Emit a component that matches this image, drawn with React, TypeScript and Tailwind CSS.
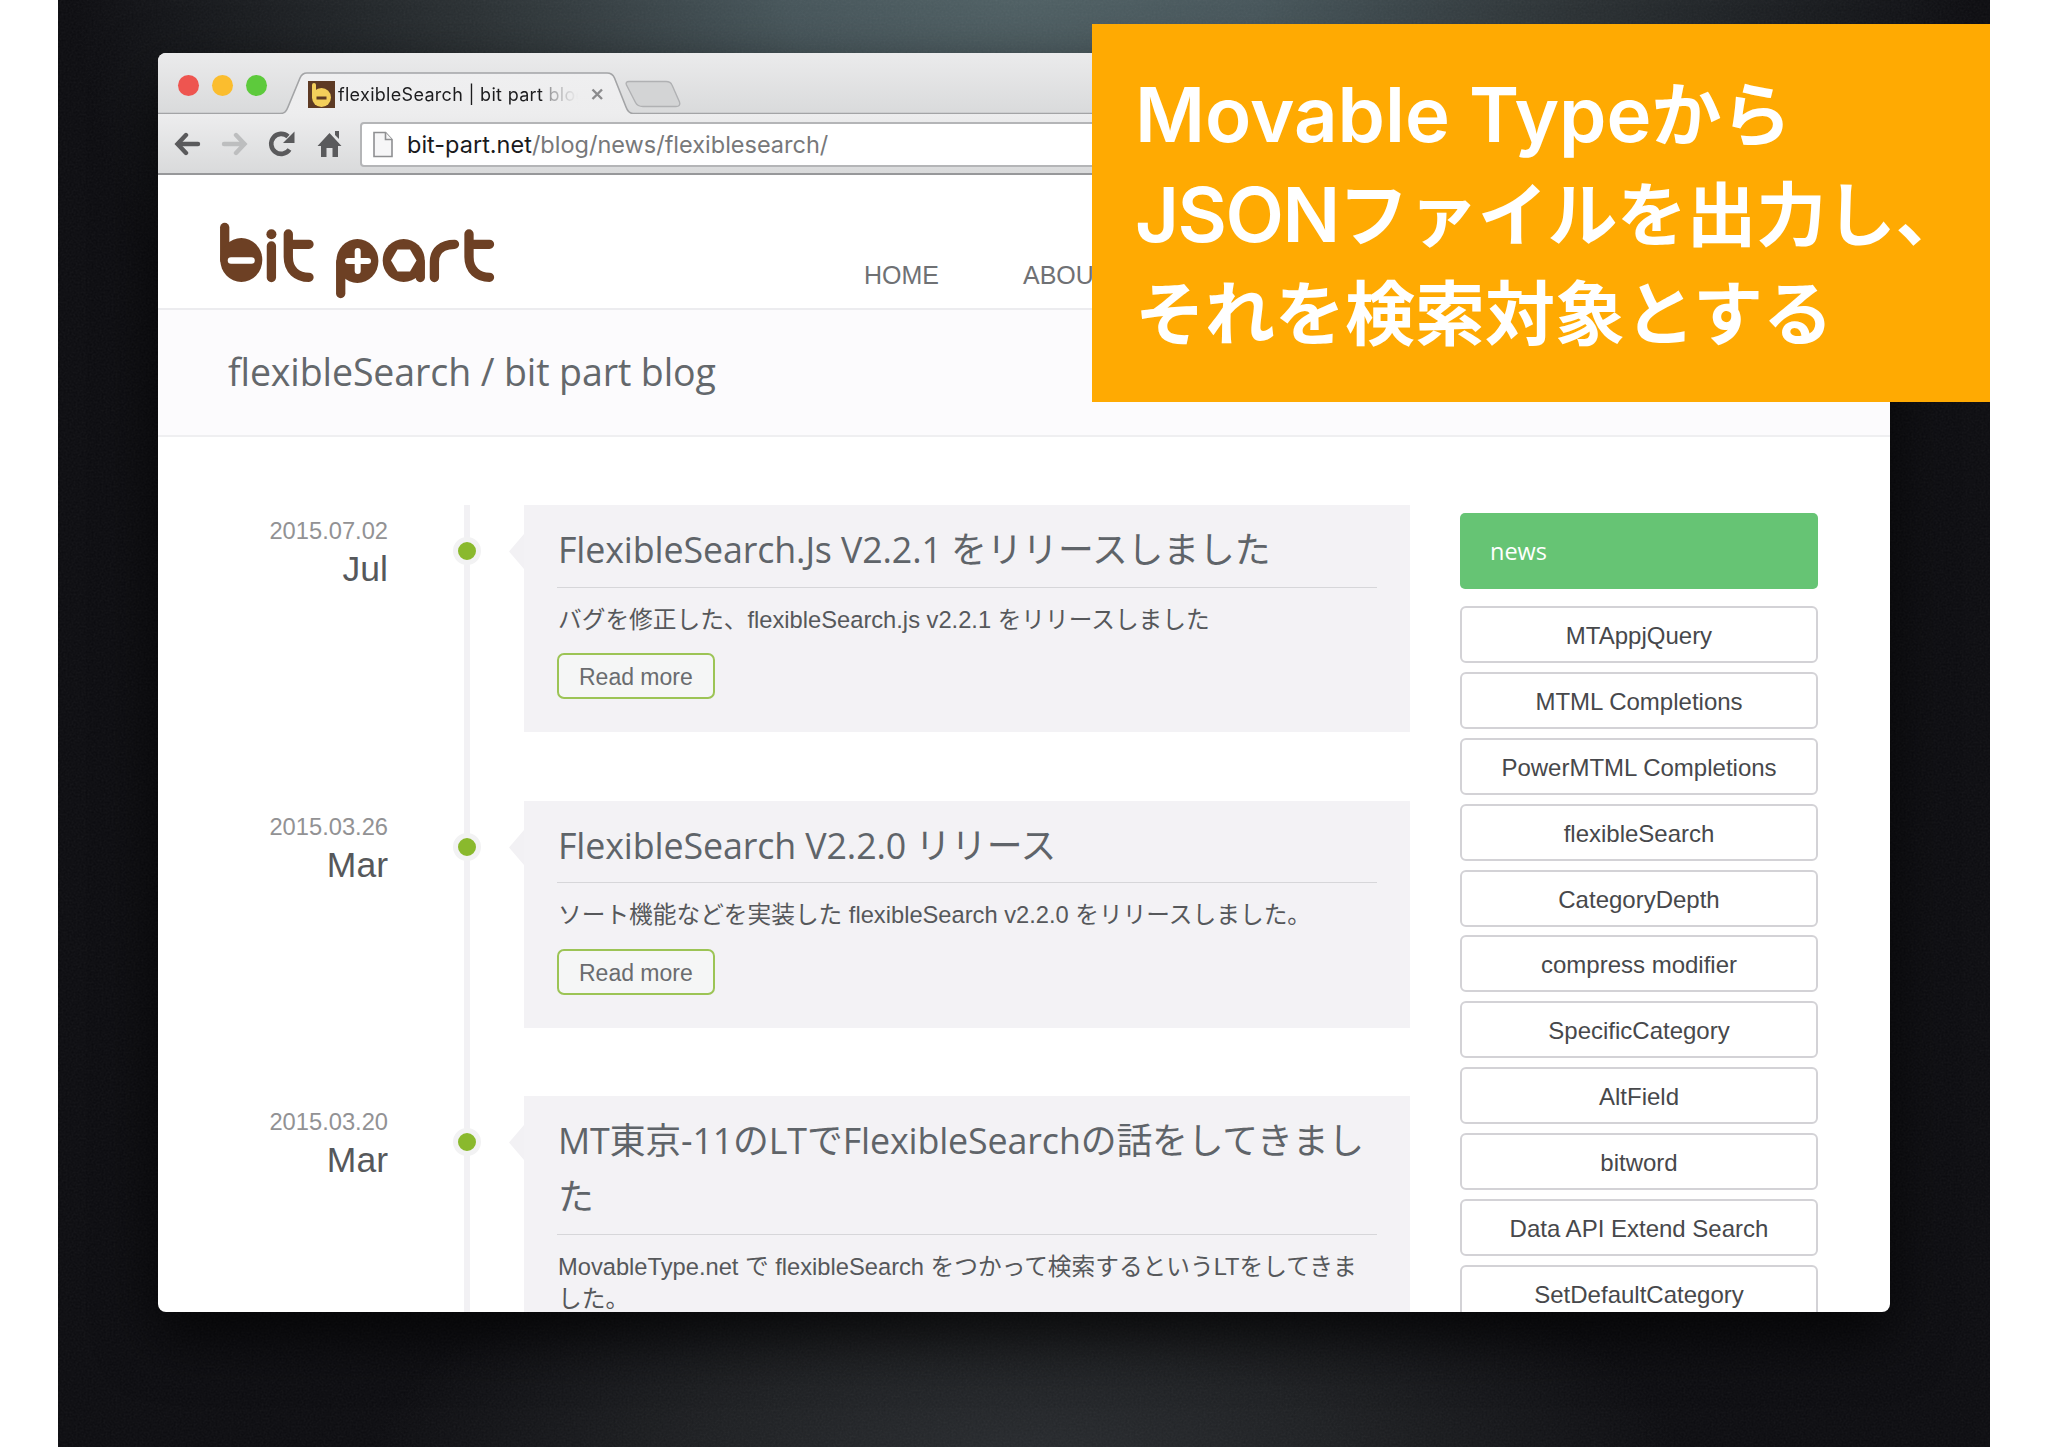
import { ReactNode } from 'react';

const entries = [
  {
    date: '2015.07.02',
    month: 'Jul',
    title: 'FlexibleSearch.Js V2.2.1 をリリースしました',
    body: 'バグを修正した、flexibleSearch.js v2.2.1 をリリースしました',
    more: true,
  },
  {
    date: '2015.03.26',
    month: 'Mar',
    title: 'FlexibleSearch V2.2.0 リリース',
    body: 'ソート機能などを実装した flexibleSearch v2.2.0 をリリースしました。',
    more: true,
  },
  {
    date: '2015.03.20',
    month: 'Mar',
    title: 'MT東京-11のLTでFlexibleSearchの話をしてきました',
    body: 'MovableType.net で flexibleSearch をつかって検索するというLTをしてきました。',
    more: false,
  },
];

const categories = [
  'MTAppjQuery',
  'MTML Completions',
  'PowerMTML Completions',
  'flexibleSearch',
  'CategoryDepth',
  'compress modifier',
  'SpecificCategory',
  'AltField',
  'bitword',
  'Data API Extend Search',
  'SetDefaultCategory',
];

function Favicon() {
  return (
    <svg width="27" height="27" viewBox="0 0 27 27">
      <rect width="27" height="27" fill="#5d3a24" />
      <rect x="4" y="2" width="4" height="16" rx="2" fill="#f3cf5b" />
      <circle cx="13.5" cy="16.5" r="9.5" fill="#f3cf5b" />
      <rect x="8.5" y="15.5" width="10" height="3" fill="#5d3a24" />
    </svg>
  );
}

function TabStrip() {
  return (
    <div className="relative flex h-[61px] items-start bg-gradient-to-b from-[#ebebec] to-[#d9dadb]">
      <svg className="absolute inset-0" width="1732" height="61" viewBox="0 0 1732 61" fill="none">
        <defs>
          <linearGradient id="tabFill" x1="0" y1="0" x2="0" y2="1">
            <stop offset="0" stopColor="#efeff0" />
            <stop offset="1" stopColor="#ededee" />
          </linearGradient>
        </defs>
        <path
          d="M0 60.5H122C127 60.5 128.500 58 130 54L142 25C143.500 21.500 145 20 149 20H449C453 20 455 21.500 456.500 25L468 54C469.500 58 471 60.500 475 60.500H1732V62H0Z"
          fill="url(#tabFill)"
          stroke="#a3a4a6"
          strokeWidth="1.6"
        />
        <path
          d="M471 28.500H508C511 28.500 513 29.500 514 32L521.500 49C522.500 52 521 53.500 518 53.500H485C481 53.500 479 52.500 477.500 49.500L468.500 32C467.500 29.500 468.500 28.500 471 28.500Z"
          fill="#d3d4d5"
          stroke="#b0b1b3"
          strokeWidth="1.4"
        />
      </svg>
      <div className="relative flex gap-[13px] pt-[22px] pl-[20px]">
        <span className="size-[21px] rounded-full bg-[#ee5550]" />
        <span className="size-[21px] rounded-full bg-[#fbbd2e]" />
        <span className="size-[21px] rounded-full bg-[#5dca3c]" />
      </div>
      <div className="relative ml-[41px] flex items-center gap-[3px] pt-[28px]">
        <Favicon />
        <span className="w-[240px] overflow-hidden bg-[linear-gradient(90deg,#1c1c1e_86%,#9a9a9c_88%,#ededee_100%)] bg-clip-text font-['Inter',sans-serif] text-[18px] leading-[27px] tracking-[0.3px] whitespace-nowrap text-transparent">
          flexibleSearch | bit part blog
        </span>
        <svg className="ml-[10px]" width="13" height="13" viewBox="0 0 13 13" stroke="#8b8b8d" strokeWidth="2.400">
          <path d="M1.500 1.500L11 11M11 1.500L1.500 11" />
        </svg>
      </div>
    </div>
  );
}

function Toolbar() {
  return (
    <div className="relative flex h-[61px] items-start border-b-2 border-[#97989a] bg-gradient-to-b from-[#ededee] to-[#d9dadb] pt-[8px]">
      <div className="flex pt-[8px] pl-[16px]">
        <svg width="27" height="26" viewBox="0 0 27 26" fill="none" stroke="#5a5a5c" strokeWidth="4.400" strokeLinecap="round">
          <path d="M24 14H5" />
          <path d="M12 5L3.500 14L12 23" />
        </svg>
        <svg className="ml-[20px]" width="27" height="26" viewBox="0 0 27 26" fill="none" stroke="#bdbebf" strokeWidth="4.400" strokeLinecap="round">
          <path d="M3 14H22" />
          <path d="M15 5L23.500 14L15 23" />
        </svg>
        <svg className="ml-[20px]" width="28" height="28" viewBox="0 0 28 28" fill="none">
          <path d="M21.500 19.500A10 10 0 1 1 20 6.500" stroke="#5a5a5c" strokeWidth="4.600" />
          <path d="M26.500 1.500V13H15Z" fill="#5a5a5c" />
        </svg>
        <svg className="ml-[21px]" width="26" height="28" viewBox="0 0 26 28" fill="#5a5a5c">
          <path d="M12.500 3L24.500 16H21V27H15.500V18H9.500V27H4V16H0.500Z" />
          <path d="M18 1H22V9L18 5Z" />
        </svg>
      </div>
      <div className="ml-[17px] flex h-[45px] flex-1 items-start rounded-[4px] border-2 border-[#b4b5b7] bg-white pt-[7px] pl-[11px]">
        <svg width="20" height="27" viewBox="0 0 20 27" fill="#f6f6f7" stroke="#8e8f91" strokeWidth="1.600">
          <path d="M1 1.500H12.500L19 8.500V25.500H1Z" />
          <path d="M12.500 1.500V8.500H19" />
        </svg>
        <p className="ml-[14px] font-['Inter',sans-serif] text-[23.500px] leading-[28px] text-[#77787a]">
          <span className="text-[#1a1a1c]">bit-part.net</span>/blog/news/flexiblesearch/
        </p>
      </div>
    </div>
  );
}

function Logo() {
  return (
    <svg width="276" height="77" viewBox="219 222 276 77" fill="none" stroke="#6d4024" strokeWidth="9.300" strokeLinecap="round">
      {/* b */}
      <path d="M224.700 227.500V260" />
      <ellipse cx="241.300" cy="260" rx="21" ry="22" fill="#6d4024" stroke="none" />
      <path d="M231 260.500H251.500" stroke="#fff" strokeWidth="6.500" />
      {/* i */}
      <circle cx="271.400" cy="234.300" r="5" fill="#6d4024" stroke="none" />
      <path d="M271.400 246V277.500" />
      {/* t */}
      <path d="M288.300 234V257C288.300 270 297 277.300 309 277.300M288.300 244.300H309" />
      {/* p */}
      <path d="M340.700 262V293.500" />
      <ellipse cx="357.400" cy="261" rx="21" ry="22" fill="#6d4024" stroke="none" />
      <path d="M348 261H368M357.700 251V271" stroke="#fff" strokeWidth="6" />
      {/* a */}
      <ellipse cx="403.700" cy="260.500" rx="21" ry="21.500" fill="#6d4024" stroke="none" />
      <path d="M420.300 262V277.500" />
      <path d="M397.500 249.500H410L416.500 260.500L410 271.500H397.500L391 260.500Z" fill="#fff" stroke="none" />
      {/* r */}
      <path d="M434.400 277.500V262C434.400 251 442 244.300 454.500 244.300" />
      {/* t */}
      <path d="M469 234V257C469 270 478 277.300 489.500 277.300M469 244.300H489.500" />
    </svg>
  );
}

function Entry({ date, month, title, body, more }: (typeof entries)[number]) {
  return (
    <article className="flex">
      <div className="w-[230px] shrink-0 pt-[10px] text-right">
        <p className="text-[23.700px] leading-[32px] text-[#929294]">{date}</p>
        <p className="mt-[2px] text-[35.500px] leading-[40px] text-[#56585b]">{month}</p>
      </div>
      <div className="relative w-[136px] shrink-0 pl-[76px]">
        <div className="h-full w-[6px] bg-[#f2f1f4]" />
        <span className="absolute top-[32px] left-[65px] size-[28px] rounded-full border-[5px] border-[#f2f2f3] bg-[#8ab92d]" />
        <svg className="absolute top-[29px] right-0" width="16" height="35" viewBox="0 0 16 35" fill="#f2f1f4">
          <path d="M16 0V35L1 17.500Z" />
        </svg>
      </div>
      <div className="mb-[68.300px] w-[886px] bg-[#f3f2f5] px-[33px] pt-[16px] pb-[33px]">
        <h2 className="border-b border-[#d6d6d9] pb-[9.500px] pl-px font-['Open_Sans','Noto_Sans_CJK_JP',sans-serif] text-[35.800px] leading-[56px] tracking-[-0.12px] text-[#5f6469]">
          {title}
        </h2>
        <p className="mt-[16px] pr-3 pl-px text-[23.700px] leading-[32.700px] text-[#56585b]">{body}</p>
        {more && (
          <button className="mt-[17px] block h-[46px] rounded-[7px] border-2 border-[#9cc455] bg-[#f5f6f6] px-[20px] text-[23px] leading-[44px] text-[#6a6c6f]">
            Read more
          </button>
        )}
      </div>
    </article>
  );
}

function BrowserWindow({ children }: { children: ReactNode }) {
  return (
    <div className="h-[1259px] w-[1732px] overflow-hidden rounded-[8px] bg-white shadow-[0_24px_60px_rgba(0,0,0,0.7)]">
      <TabStrip />
      <Toolbar />
      {children}
    </div>
  );
}

export default function App() {
  return (
    <div className="h-[1447px] w-[2048px] overflow-hidden bg-white pl-[58px] font-['Liberation_Sans','Noto_Sans_CJK_JP',sans-serif]">
      <main className="relative h-full w-[1932px] bg-[#0b0b0f] bg-[radial-gradient(ellipse_950px_700px_at_50%_-20px,#4f6064_0%,#46555a_25%,#2a3033_58%,transparent_100%),radial-gradient(ellipse_660px_270px_at_50%_1480px,#292c30_0%,#1d1f22_50%,transparent_100%)] pt-[53px] pl-[100px]">
        <svg className="absolute inset-0 opacity-[0.07]" width="1932" height="1447">
          <filter id="grain">
            <feTurbulence type="fractalNoise" baseFrequency="0.500" numOctaves="2" />
            <feColorMatrix type="saturate" values="0" />
          </filter>
          <rect width="1932" height="1447" filter="url(#grain)" />
        </svg>

        <div className="relative">
          <BrowserWindow>
            <header className="flex h-[135px] items-start border-b-2 border-[#ececef] pt-[47px] pl-[61px]">
              <Logo />
              <nav className="flex gap-[84px] pt-[36px] pl-[369px] text-[25px] leading-[34px] text-[#6f7174]">
                <a>HOME</a>
                <a>ABOUT</a>
              </nav>
            </header>
            <h1 className="h-[127px] border-b-2 border-[#efeff1] bg-[#fcfbfd] pl-[70px] font-['Open_Sans','Noto_Sans',sans-serif] text-[37.500px] leading-[123px] tracking-[-0.1px] text-[#64686c]">
              flexibleSearch / bit part blog
            </h1>

            <div className="flex pt-[68px]">
              <section>
                {entries.map((entry) => (
                  <Entry key={entry.date} {...entry} />
                ))}
              </section>
              <aside className="ml-[50px] w-[358px] pt-[8px]">
                <h3 className="mb-[17px] h-[76px] rounded-[5px] bg-[#66c474] pl-[30px] font-['Open_Sans','Noto_Sans',sans-serif] text-[23.500px] leading-[77px] text-white">
                  news
                </h3>
                <ul className="flex flex-col gap-[8.900px]">
                  {categories.map((name) => (
                    <li
                      key={name}
                      className="h-[57px] rounded-[6px] border-2 border-[#d3d2d6] text-center text-[24px] leading-[55px] text-[#47484b]"
                    >
                      {name}
                    </li>
                  ))}
                </ul>
              </aside>
            </div>
          </BrowserWindow>
        </div>

        {/* Slide caption */}
        <div className="absolute top-[24px] right-0 h-[378px] w-[898px] bg-[#ffaa02] pt-[42px] pl-[43px] font-['Inter','Noto_Sans_CJK_JP',sans-serif] text-[70px] leading-[99.500px] font-bold whitespace-nowrap text-white">
          <p>
            <span className="align-[-1px] text-[76px] leading-none font-semibold">Movable Type</span>から
          </p>
          <p>
            <span className="align-[-1px] text-[76px] leading-none font-semibold tracking-[-1.500px]">JSON</span>
            <span className="tracking-[-0.4px]">ファイルを出力し、</span>
          </p>
          <p>それを検索対象とする</p>
        </div>
      </main>
    </div>
  );
}
